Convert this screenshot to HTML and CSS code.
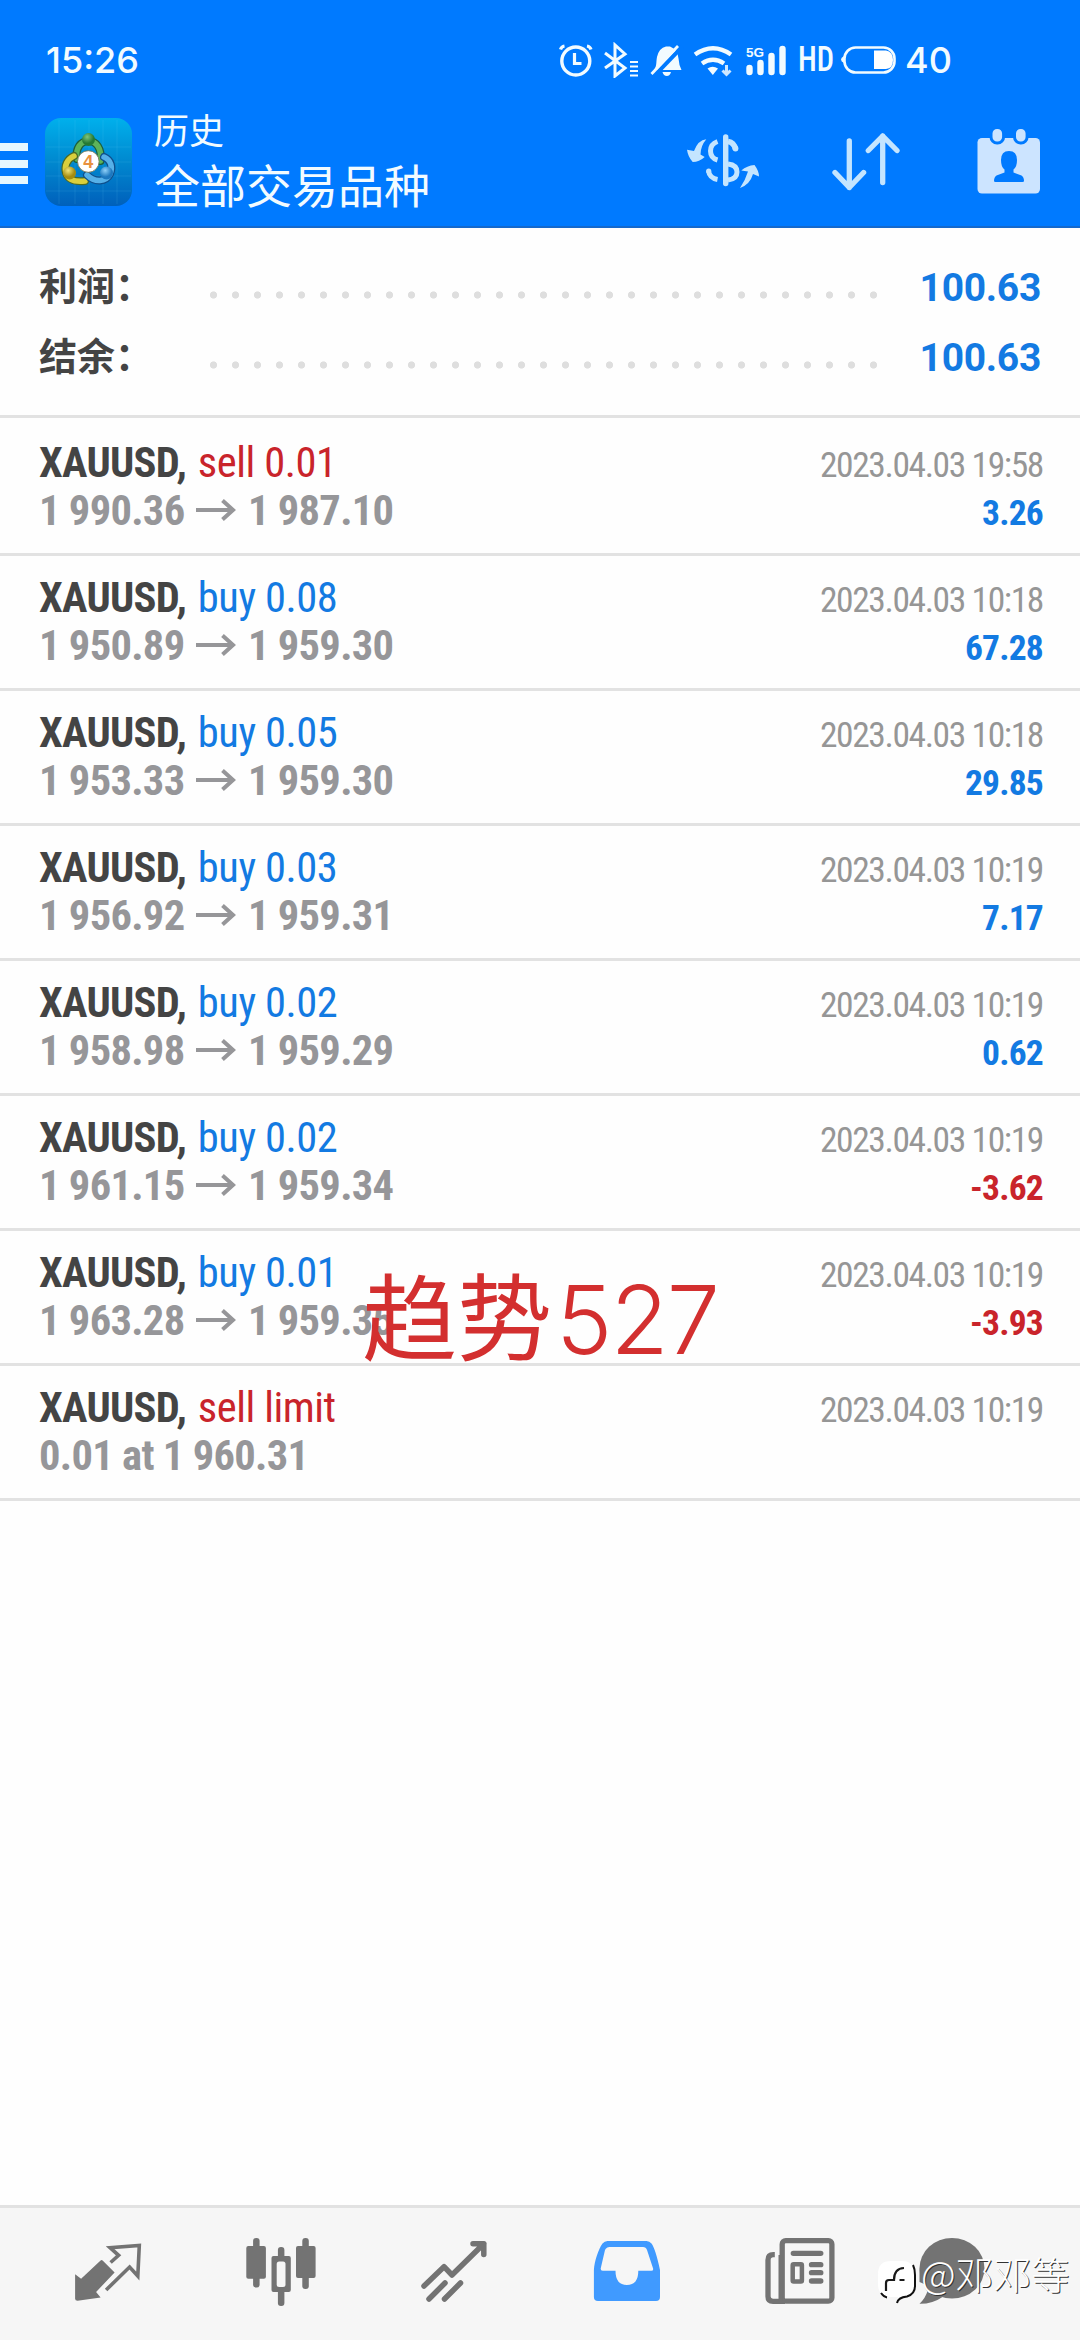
FILE: index.html
```html
<!DOCTYPE html>
<html lang="zh-CN">
<head>
<meta charset="utf-8">
<title>历史</title>
<link rel="stylesheet" href="styles.css">
</head>
<body>
<div class="screen">
  <header class="header">
    <div class="status">
      <span class="clock">15:26</span>
      <svg class="status-icons" width="250" height="36" viewBox="555 41 250 36" fill="none" stroke="#f2fbff">
        <circle cx="574.8" cy="60" r="14" stroke-width="3.4"/>
        <path d="M573.5 52v10.5h7M559.5 48.5q1-3 4-3.5M590 48.500q-1-3-4-3.500" stroke-width="3.200"/>
        <path d="M604 52l20 15-10 8V44l10 9-20 14" stroke-width="3"/>
        <path d="M629 61h8M629 65.500h8M629 70h8M629 74.500h8" stroke-width="2.200"/>
        <path d="M653 69c3-4 2-8 3-13q2-9 9-10.500h4q8 3 8.500 12 .5 7 3 11.500z" fill="#f2fbff" stroke="none"/>
        <path d="M661.500 71h8.500q-1 4-4.200 4t-4.300-4z" fill="#f2fbff" stroke="none"/>
        <path d="M652.500 75.500l29-30" stroke="#007aff" stroke-width="4"/>
        <path d="M650.500 73l26.500-28" stroke-width="2.800"/>
        <path d="M694 53.500q18-12.500 36 0M701 62.500q11-7.500 22 0" stroke-width="4.400"/>
        <path d="M706.500 67.500q5-3.500 10.500 0l-5.200 6.500z" fill="#f2fbff" stroke="none"/>
        <path d="M725.500 64v8M721.500 69.500l4 4 4-4" stroke-width="3" opacity=".85"/>
        <path d="M748.500 67v4M759.500 62v9M770.500 55v16M781.500 48v23" stroke-width="6.400" stroke-linecap="round"/>
        <text class="net-label" x="745" y="56">5G</text>
      </svg>
      <span class="hd">HD</span>
      <svg class="battery" width="56" height="30" viewBox="841 45 56 30" fill="none">
        <rect x="844.500" y="47.500" width="50" height="25" rx="11" stroke="#f2fbff" stroke-width="2.600"/>
        <path d="M844 56q-3 1.500-3 3.500t3 3.500z" fill="#f2fbff"/>
        <path d="M874 50.500h12q7 1 7 9.500t-7 9h-12z" fill="#fff"/>
      </svg>
      <span class="level">40</span>
    </div>
    <div class="toolbar">
      <div class="menu"><i></i><i></i><i></i></div>
      <svg class="logo" width="88" height="88" viewBox="0 0 88 88">
        <defs>
          <linearGradient id="tile" x1="0" y1="0" x2="0" y2="1"><stop offset="0" stop-color="#00b0ec"/><stop offset=".5" stop-color="#0088cf"/><stop offset="1" stop-color="#0060bb"/></linearGradient>
          <radialGradient id="green" cx=".4" cy=".3"><stop offset="0" stop-color="#7fc47c"/><stop offset="1" stop-color="#247a34"/></radialGradient>
          <radialGradient id="gold" cx=".4" cy=".3"><stop offset="0" stop-color="#f0e478"/><stop offset="1" stop-color="#a58c10"/></radialGradient>
          <radialGradient id="sky" cx=".4" cy=".3"><stop offset="0" stop-color="#8fd0f8"/><stop offset="1" stop-color="#1d78bf"/></radialGradient>
        </defs>
        <rect width="87" height="88" rx="16" fill="url(#tile)"/>
        <path d="M14 2v84M30 2v84M44 2v84M58 2v84M72 2v84M1 29h85M1 44h85M1 58h85M1 73h85" stroke="#7fd8ff" stroke-opacity=".12"/>
        <g fill="none" stroke-linecap="round">
          <path d="M32 41C30 30 36 23 43.500 23S57 30 55.500 43" stroke="#1c5f3c" stroke-width="8"/>
          <path d="M32 41C30 30 36 23 43.500 23S57 30 55.500 43" stroke="#5db35a" stroke-width="5.500"/>
          <path d="M29 38C22 41 19 48 21 55 23 62 31 64 40 63" stroke="#4c6a25" stroke-width="8"/>
          <path d="M29 38C22 41 19 48 21 55 23 62 31 64 40 63" stroke="#d9cf3c" stroke-width="5.500"/>
          <path d="M59 39C66 42 68 49 65 56 61 64 50 65 42 57" stroke="#0f4f8c" stroke-width="8"/>
          <path d="M59 39C66 42 68 49 65 56 61 64 50 65 42 57" stroke="#55b0e8" stroke-width="5.500"/>
        </g>
        <circle cx="43.500" cy="21.500" r="6.500" fill="url(#green)"/>
        <circle cx="24.500" cy="55" r="6.500" fill="url(#gold)"/>
        <circle cx="61.500" cy="55" r="6.500" fill="url(#sky)"/>
        <circle cx="43.300" cy="43.500" r="10.800" fill="#fff" stroke="#6b6b45" stroke-width=".8"/>
        <text class="logo-digit" x="43.300" y="50">4</text>
      </svg>
      <div class="titles">
        <div class="title-small">历史</div>
        <div class="title-large">全部交易品种</div>
      </div>
      <svg class="act act-dollar" width="74" height="60" viewBox="45 22 74 60" fill="none" stroke="#c4e5ff">
        <path d="M84.700 27v46.500" stroke-width="5.400" stroke-linecap="round"/>
        <path d="M76.500 31.500Q69.500 34 69.500 41t7 9M67.500 61q1 7 9 8.500M87 54q9 1 9 8t-9 8" stroke-width="5"/>
        <path d="M87 31.500q6 1 7.500 7.500" stroke-width="5.600"/><circle cx="94.500" cy="38.500" r="2.900" fill="#c4e5ff" stroke="none"/><circle cx="67.700" cy="61" r="2.600" fill="#c4e5ff" stroke="none"/>
        <path d="M65.300 29.200Q57 30 53 41l-7-1.200Q47 47 51.700 52q6.500 0 12-5l-4.200-2.500Q59.500 36 65.300 29.200zM99 78Q104 71 107 61.500l-6.700-1Q106 55.500 113.500 55q4.500 6 4.500 11.500l-6-2.500Q109 74.500 99 78z" fill="#c4e5ff" stroke="none"/>
      </svg>
      <svg class="act act-sort" width="68" height="60" viewBox="191 22 68 60" fill="none" stroke="#c4e5ff" stroke-width="5.300" stroke-linecap="round" stroke-linejoin="round">
        <path d="M208.300 31v46.500M194 62.500l14.300 15 14.300-15M241.700 72.500V26M227.300 40.500l14.400-14.500 14.300 14.500"/>
      </svg>
      <svg class="act act-calendar" width="64" height="67" viewBox="336 18 64 67">
        <rect x="336.500" y="28" width="62.500" height="55.500" rx="4.500" fill="#cce4ff"/>
        <g fill="#cce4ff" stroke="#007aff" stroke-width="3"><rect x="350" y="17.500" width="12.600" height="15.500" rx="6"/><rect x="373.500" y="17.500" width="12.600" height="15.500" rx="6"/></g>
        <path d="M368 41q-8 0-8 9 0 7 3.500 9.500v3l-8 3Q353 67 353 71q0 1 1.500 1h27q1.500 0 1.500-1 0-4-2.500-5.500l-8-3v-3Q376 57 376 50q0-9-8-9z" fill="#007aff"/>
      </svg>
    </div>
  </header>

  <section class="summary">
    <div class="sum-row"><span class="sum-label">利润：</span><span class="dots"></span><span class="sum-value">100.63</span></div>
    <div class="sum-row"><span class="sum-label">结余：</span><span class="dots"></span><span class="sum-value">100.63</span></div>
  </section>

  <main class="deals">
    <div class="deal">
      <div class="line"><span class="name"><b>XAUUSD,</b> <span class="side red">sell 0.01</span></span><span class="date">2023.04.03 19:58</span></div>
      <div class="line"><span class="price">1 990.36<svg class="arrow" viewBox="0 0 40 22"><path d="M0 11h37M26.500 1.500l10.500 9.500-10.500 9.500"/></svg>1 987.10</span><span class="profit blue">3.26</span></div>
    </div>
    <div class="deal">
      <div class="line"><span class="name"><b>XAUUSD,</b> <span class="side blue">buy 0.08</span></span><span class="date">2023.04.03 10:18</span></div>
      <div class="line"><span class="price">1 950.89<svg class="arrow" viewBox="0 0 40 22"><path d="M0 11h37M26.500 1.500l10.500 9.500-10.500 9.500"/></svg>1 959.30</span><span class="profit blue">67.28</span></div>
    </div>
    <div class="deal">
      <div class="line"><span class="name"><b>XAUUSD,</b> <span class="side blue">buy 0.05</span></span><span class="date">2023.04.03 10:18</span></div>
      <div class="line"><span class="price">1 953.33<svg class="arrow" viewBox="0 0 40 22"><path d="M0 11h37M26.500 1.500l10.500 9.500-10.500 9.500"/></svg>1 959.30</span><span class="profit blue">29.85</span></div>
    </div>
    <div class="deal">
      <div class="line"><span class="name"><b>XAUUSD,</b> <span class="side blue">buy 0.03</span></span><span class="date">2023.04.03 10:19</span></div>
      <div class="line"><span class="price">1 956.92<svg class="arrow" viewBox="0 0 40 22"><path d="M0 11h37M26.500 1.500l10.500 9.500-10.500 9.500"/></svg>1 959.31</span><span class="profit blue">7.17</span></div>
    </div>
    <div class="deal">
      <div class="line"><span class="name"><b>XAUUSD,</b> <span class="side blue">buy 0.02</span></span><span class="date">2023.04.03 10:19</span></div>
      <div class="line"><span class="price">1 958.98<svg class="arrow" viewBox="0 0 40 22"><path d="M0 11h37M26.500 1.500l10.500 9.500-10.500 9.500"/></svg>1 959.29</span><span class="profit blue">0.62</span></div>
    </div>
    <div class="deal">
      <div class="line"><span class="name"><b>XAUUSD,</b> <span class="side blue">buy 0.02</span></span><span class="date">2023.04.03 10:19</span></div>
      <div class="line"><span class="price">1 961.15<svg class="arrow" viewBox="0 0 40 22"><path d="M0 11h37M26.500 1.500l10.500 9.500-10.500 9.500"/></svg>1 959.34</span><span class="profit red">-3.62</span></div>
    </div>
    <div class="deal">
      <div class="line"><span class="name"><b>XAUUSD,</b> <span class="side blue">buy 0.01</span></span><span class="date">2023.04.03 10:19</span></div>
      <div class="line"><span class="price">1 963.28<svg class="arrow" viewBox="0 0 40 22"><path d="M0 11h37M26.500 1.500l10.500 9.500-10.500 9.500"/></svg>1 959.35</span><span class="profit red">-3.93</span></div>
    </div>
    <div class="deal">
      <div class="line"><span class="name"><b>XAUUSD,</b> <span class="side red">sell limit</span></span><span class="date">2023.04.03 10:19</span></div>
      <div class="line"><span class="price">0.01 at 1 960.31</span></div>
    </div>
  </main>

  <nav class="tabs">
    <svg class="tab" viewBox="72.400 46 72 72">
      <path d="M75.500 84.300l6 4.400L101 70.500q1-1 2 0l12 12L96.500 102l4.500 5.500-23 3.300q-2.500 0-2.500-2z" fill="#737373"/>
      <path d="M111 72.500l8-7.200-8.500-7.600L139.700 55.500l-1.500 30.500L130 77l-23.500 23" fill="none" stroke="#737373" stroke-width="3.600"/>
    </svg>
    <svg class="tab" viewBox="245 46 72 72" fill="#737373">
      <rect x="253.100" y="48" width="6.500" height="49.500" rx="3"/><rect x="246.300" y="56" width="19.600" height="32.700" rx="2"/>
      <rect x="302.300" y="48" width="6.500" height="51" rx="3"/><rect x="296" y="56" width="19.600" height="32" rx="2"/>
      <rect x="277.900" y="57" width="6.500" height="59" rx="3"/><rect x="271.500" y="66" width="19.300" height="36" rx="2"/>
      <rect x="276.700" y="71.500" width="8.800" height="25.500" rx="2.500" fill="#f6f6f6"/>
    </svg>
    <svg class="tab" viewBox="418 46 72 72" fill="none" stroke="#737373" stroke-width="5.500" stroke-linecap="round" stroke-linejoin="round">
      <path d="M424 96l20-19.300 8 8.300 31.800-31.200M473 53.700h10.800v10.800M429 109l16-16M444.500 109l16-16"/>
    </svg>
    <svg class="tab" viewBox="51.500 46 72 72">
      <path d="M54.400 80C55 71 59 59 63 53.500Q65 51 68 51h39q3 0 5 2.500 4 5.500 8.500 26.500v27q0 4-4 4h-58q-4.100 0-4.100-4zM67.800 57.500Q66 58.500 65.500 60l-4.300 18.500q-.2 2.300 2 2.300H76q0 14.200 11.400 14.200T98.800 80.800h13q2.300 0 1.800-2.300L107.500 60q-1-3-4-3H70q-1.200 0-2.200.5z" fill="#409aff" fill-rule="evenodd"/>
    </svg>
    <svg class="tab" viewBox="225 46 72 72" fill="none" stroke="#737373" stroke-width="5.300">
      <rect x="243.200" y="50.700" width="49.700" height="60.500" rx="3.500"/>
      <path d="M235.800 64.700h-1.500q-5.300 0-5.300 5.300v36.500q0 4.800 5 4.800h12"/><path d="M241.500 65v46" stroke-width="4"/>
      <path d="M254.300 63.300h27.500M272.500 74.700h9.300M272.500 82.700h9.300M272.500 91h9.300" stroke-linecap="round"/>
      <rect x="253.700" y="74.200" width="9.200" height="17.200" rx="1" stroke-width="4.500"/>
    </svg>
    <svg class="tab" viewBox="376.500 46 72 72" fill="#737373">
      <ellipse cx="412.500" cy="78.300" rx="32.500" ry="30.300"/>
      <path d="M380 79v13q9 3 8 9-2 7-8 12.800 13 .2 23-6.800z"/>
    </svg>
  </nav>

  <div class="stamp">趋势<span>527</span></div>
  <div class="credit">
    <svg width="40" height="46" viewBox="337 69 40 46">
      <path d="M351 71h11q12 0 12 13v10q0 9-7 12-7 1-9 6v-5h-7q-13 0-13-13V84q0-13 13-13z" fill="#fff"/>
      <path d="M373 75q2 4 2 10v11q0 8-8 10.500-9 1-10 6.500M341 103q3 4 6 4.500" fill="none" stroke="#111" stroke-width="2"/>
      <path d="M346 101v-8q0-3 3-3h5q0-11.500 10-12M359.500 90h5" fill="none" stroke="#1a1a1a" stroke-width="2.200"/>
    </svg>
    <span>@邓邓等</span>
  </div>
</div>
</body>
</html>
```

FILE: styles.css
```css
* { box-sizing: border-box; }
body { margin: 0; background: #fefefe; }
.screen {
  position: relative;
  display: flex;
  flex-direction: column;
  width: 1080px;
  height: 2340px;
  overflow: hidden;
  font-family: "Roboto Condensed", Roboto, "Noto Sans CJK SC", sans-serif;
}
.blue { color: #137ae2; }
.red { color: #c9242b; }

.header { height: 228px; background: #007aff; border-bottom: 2px solid #1569cc; color: #f2fbff; }
.status { display: flex; align-items: center; height: 120px; padding-left: 46px; }
.clock, .level { font: 500 36px/36px Inter, sans-serif; }
.clock { width: 510px; }
.status-icons { flex: none; margin-right: -8px; }
.hd { width: 43px; font: 500 35px/36px Roboto, sans-serif; font-stretch: 75%; transform: scaleX(.87); transform-origin: left; }
.net-label { font: 700 13.500px "Liberation Sans", sans-serif; fill: #f2fbff; stroke: none; }
.battery { flex: none; margin-right: 8px; }

.toolbar { display: flex; align-items: flex-start; height: 106px; margin-top: -9px; padding-top: 7px; }
.menu { display: flex; flex-direction: column; gap: 8.500px; width: 28px; margin: 25px 17px 0 0; }
.menu i { height: 8px; background: #e6f7ff; }
.logo { flex: none; }
.logo-digit { font: 700 18px "Liberation Sans", sans-serif; fill: #e8913f; text-anchor: middle; }
.titles { width: 553px; padding-left: 21px; font-family: "Noto Sans CJK SC", sans-serif; font-weight: 400; }
.title-small { margin-top: -15px; font-size: 35px; line-height: 52px; }
.title-large { font-size: 46px; line-height: 57px; }
.act { flex: none; }
.act-dollar { margin-top: 14px; }
.act-sort { margin: 14px 0 0 72px; }
.act-calendar { margin: 10px 0 0 77px; }

.summary { height: 190px; padding: 23px 39px 0 39px; border-bottom: 3px solid #e2e2e2; }
.sum-row { display: flex; align-items: center; height: 70px; }
.sum-label { width: 163px; margin-top: -4px; font: 700 38px/70px "Noto Sans CJK SC", sans-serif; color: #444; }
.dots { width: 682px; height: 8px; margin-top: 17px; background: radial-gradient(circle at 11.500px 4px, #dedede 3.200px, transparent 4px) 0 0 / 22px 8px; }
.sum-value { flex: 1; margin-top: 3px; text-align: right; font: 700 39px/70px Roboto, sans-serif; letter-spacing: -.3px; color: #137ae2; }

.deals { display: flex; flex-direction: column; }
.deal { height: 135px; padding: 18px 37px 0 39px; border-bottom: 3px solid #e2e2e2; }
.deal:first-child { height: 138px; padding-top: 21px; }
.line { display: flex; justify-content: space-between; height: 48px; line-height: 48px; white-space: nowrap; font-stretch: 75%; }
.name, .price { font-size: 42.500px; letter-spacing: -.7px; }
.name b { font-weight: 700; color: #444; }
.side { margin-left: 2.500px; letter-spacing: -.45px; }
.price { font-weight: 700; color: #969699; }
.date { padding-top: 2px; font-size: 35.500px; letter-spacing: -1.400px; color: #969696; }
.profit { padding-top: 2px; font-size: 35.500px; font-weight: 700; letter-spacing: -.8px; }
.arrow { width: 40px; height: 22px; margin: 0 11.500px 4px 12px; fill: none; stroke: #969699; stroke-width: 4; }

.tabs { display: flex; align-items: flex-start; gap: 101px; height: 135px; margin-top: auto; padding: 28px 0 0 72px; border-top: 3px solid #e2e2e2; background: #f6f6f6; }
.tab { flex: none; width: 72px; height: 72px; }
.tab:last-child { margin-left: -21px; }

.stamp { position: absolute; left: 362px; top: 1243px; font: 400 95px/140px "Noto Sans CJK SC", sans-serif; color: #d32f2f; white-space: nowrap; }
.stamp span { margin-left: 4px; font-family: Inter, sans-serif; font-weight: 300; letter-spacing: -2px; }
.credit { position: absolute; left: 877px; top: 2259px; display: flex; align-items: flex-start; gap: 4px; font: 300 38px/40px "Noto Sans CJK SC", sans-serif; color: #fff; text-shadow: 1px 1px 0 #333; white-space: nowrap; }
.credit span { margin-top: -6px; }
```
